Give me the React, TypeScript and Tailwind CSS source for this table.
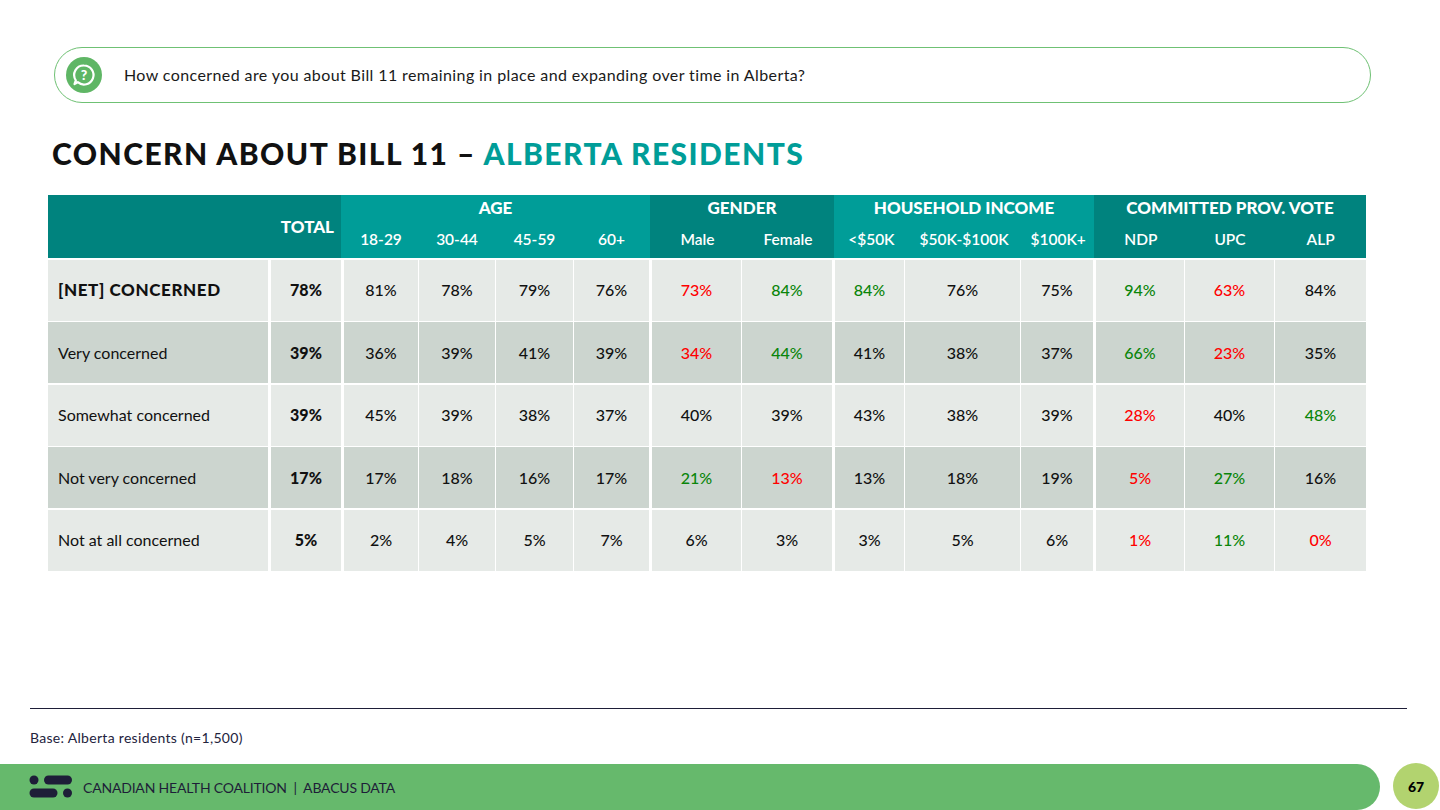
import React from "react";

type Col = { w: string; gap: string };
const cols: Col[] = [
  { w: "w-[70px]", gap: "ml-[3px]" },
  { w: "w-[74px]", gap: "ml-[3px]" },
  { w: "w-[76px]", gap: "ml-[1px]" },
  { w: "w-[77px]", gap: "ml-[1px]" },
  { w: "w-[75px]", gap: "ml-[1px]" },
  { w: "w-[89px]", gap: "ml-[3px]" },
  { w: "w-[90px]", gap: "ml-[1px]" },
  { w: "w-[69px]", gap: "ml-[3px]" },
  { w: "w-[115px]", gap: "ml-[1px]" },
  { w: "w-[72px]", gap: "ml-[1px]" },
  { w: "w-[88px]", gap: "ml-[3px]" },
  { w: "w-[89px]", gap: "ml-[1px]" },
  { w: "w-[91px]", gap: "ml-[1px]" },
];

// c: k=black, g=green, r=red
type Row = { label: string; bold?: boolean; vals: string[]; colors: string };
const rows: Row[] = [
  { label: "[NET] CONCERNED", bold: true, vals: ["78%", "81%", "78%", "79%", "76%", "73%", "84%", "84%", "76%", "75%", "94%", "63%", "84%"], colors: "kkkkkrggkkgrk" },
  { label: "Very concerned", vals: ["39%", "36%", "39%", "41%", "39%", "34%", "44%", "41%", "38%", "37%", "66%", "23%", "35%"], colors: "kkkkkrgkkkgrk" },
  { label: "Somewhat concerned", vals: ["39%", "45%", "39%", "38%", "37%", "40%", "39%", "43%", "38%", "39%", "28%", "40%", "48%"], colors: "kkkkkkkkkkrkg" },
  { label: "Not very concerned", vals: ["17%", "17%", "18%", "16%", "17%", "21%", "13%", "13%", "18%", "19%", "5%", "27%", "16%"], colors: "kkkkkgrkkkrgk" },
  { label: "Not at all concerned", vals: ["5%", "2%", "4%", "5%", "7%", "6%", "3%", "3%", "5%", "6%", "1%", "11%", "0%"], colors: "kkkkkkkkkkrgr" },
];

const colorCls = (c: string) =>
  c === "g" ? "text-[#0a850a]" : c === "r" ? "text-[#ff0000]" : "text-[#111111]";

function QuestionIcon() {
  return (
    <div className="relative w-[36px] h-[36px] rounded-full bg-[#5fb665] flex items-center justify-center">
      <svg width="26" height="26" viewBox="0 0 26 26" className="absolute">
        <path
          d="M13 3.5a9.5 9.5 0 1 1 -6.2 16.7 L3.5 22 L4.8 18.3 A9.5 9.5 0 0 1 13 3.5 Z"
          fill="none"
          stroke="white"
          strokeWidth="2.2"
          strokeLinejoin="round"
        />
      </svg>
      <span className="relative text-white font-black text-[14px] leading-none mt-[-1px]">?</span>
    </div>
  );
}

function Logo() {
  return (
    <svg width="44" height="24" viewBox="0 0 44 24">
      <circle cx="5" cy="5" r="4.5" fill="#1e1e38" />
      <rect x="15" y="0.5" width="28" height="9" rx="4.5" fill="#1e1e38" />
      <rect x="0.5" y="13.5" width="28" height="9" rx="4.5" fill="#1e1e38" />
      <circle cx="38.5" cy="18" r="4.5" fill="#1e1e38" />
    </svg>
  );
}

export default function App() {
  const groups = [
    { name: "AGE", bg: "bg-[#009d98]", w: "w-[309px]", subs: ["18-29", "30-44", "45-59", "60+"], cols: [1, 2, 3, 4] },
    { name: "GENDER", bg: "bg-[#00837e]", w: "w-[184px]", subs: ["Male", "Female"], cols: [5, 6] },
    { name: "HOUSEHOLD INCOME", bg: "bg-[#009d98]", w: "w-[260px]", subs: ["<$50K", "$50K-$100K", "$100K+"], cols: [7, 8, 9] },
    { name: "COMMITTED PROV. VOTE", bg: "bg-[#00837e]", w: "w-[272px]", subs: ["NDP", "UPC", "ALP"], cols: [10, 11, 12] },
  ];
  return (
    <div className="w-[1440px] h-[810px] bg-white relative overflow-hidden font-['Lato','Open_Sans',sans-serif] text-[#111]">
      {/* Question box */}
      <div className="pt-[47px] pl-[54px]">
        <div className="w-[1317px] h-[56px] border border-[#6fc174] rounded-[28px] flex items-center pl-[11px]">
          <QuestionIcon />
          <span className="ml-[22px] text-[16px] tracking-[0.4px] text-[#1a1a1a]">
            How concerned are you about Bill 11 remaining in place and expanding over time in Alberta?
          </span>
        </div>
      </div>

      {/* Title */}
      <h1 className="mt-[32px] ml-[52px] text-[30px] leading-[36px] font-black tracking-[1.45px]">
        <span className="text-[#111]">CONCERN ABOUT BILL 11 – </span>
        <span className="text-[#009d98]">ALBERTA RESIDENTS</span>
      </h1>

      {/* Table */}
      <div className="mt-[24px] ml-[48px] w-[1318px] flex flex-col">
        {/* Header */}
        <div className="flex h-[63px] text-white">
          <div className="w-[293px] bg-[#00837e] flex items-center justify-end pr-[7px]">
            <span className="text-[17px] font-black">TOTAL</span>
          </div>
          {groups.map((g, gi) => (
            <div key={gi} className={`${g.w} ${g.bg} flex flex-col`}>
              <div className="h-[21px] flex items-end justify-center text-[17px] font-black leading-none">
                {g.name}
              </div>
              <div className="flex flex-1 items-center pt-[5px]">
                {g.subs.map((s, si) => {
                  const c = cols[g.cols[si]];
                  const first = si === 0;
                  return (
                    <div
                      key={si}
                      className={`${c.w} ${first ? "ml-[3px]" : "ml-[1px]"} text-center text-[15.5px] font-semibold`}
                    >
                      {s}
                    </div>
                  );
                })}
              </div>
            </div>
          ))}
        </div>

        {/* Body rows */}
        <div className="flex flex-col gap-[1.5px] mt-[1.5px]">
          {rows.map((r, ri) => {
            const bg = ri % 2 === 0 ? "bg-[#e6eae7]" : "bg-[#ccd5cf]";
            return (
              <div key={ri} className="flex h-[61px]">
                <div className={`w-[220px] ${bg} flex items-center pl-[10px] ${r.bold ? "text-[17px] font-black tracking-[0.6px]" : "text-[16px]"}`}>
                  {r.label}
                </div>
                {r.vals.map((v, vi) => {
                  const c = cols[vi];
                  return (
                    <div
                      key={vi}
                      className={`${c.w} ${c.gap} ${bg} flex items-center justify-center text-[16px] ${vi === 0 ? "font-black" : "font-medium"} ${colorCls(r.colors[vi])}`}
                    >
                      {v}
                    </div>
                  );
                })}
              </div>
            );
          })}
        </div>
      </div>

      {/* Footer line + base */}
      <div className="absolute left-[30px] top-[708px] w-[1377px] h-px bg-[#1e1e38]" />
      <div className="absolute left-[30px] top-[727px] text-[14px] tracking-[0.3px] text-[#23233d]">Base: Alberta residents (n=1,500)</div>

      {/* Footer bar */}
      <div className="absolute left-0 top-[764px] w-[1380px] h-[46px] bg-[#66b96c] rounded-r-[23px] flex items-center pl-[29px]">
        <Logo />
        <span className="ml-[10px] text-[14px] tracking-[-0.2px] text-[#1e1e38] pt-[1px]">CANADIAN HEALTH COALITION&nbsp; |&nbsp; ABACUS DATA</span>
      </div>
      <div className="absolute left-[1393px] top-[763px] w-[46px] h-[46px] rounded-full bg-[#b2d36f] flex items-center justify-center">
        <span className="text-[14px] font-black text-black">67</span>
      </div>
    </div>
  );
}
